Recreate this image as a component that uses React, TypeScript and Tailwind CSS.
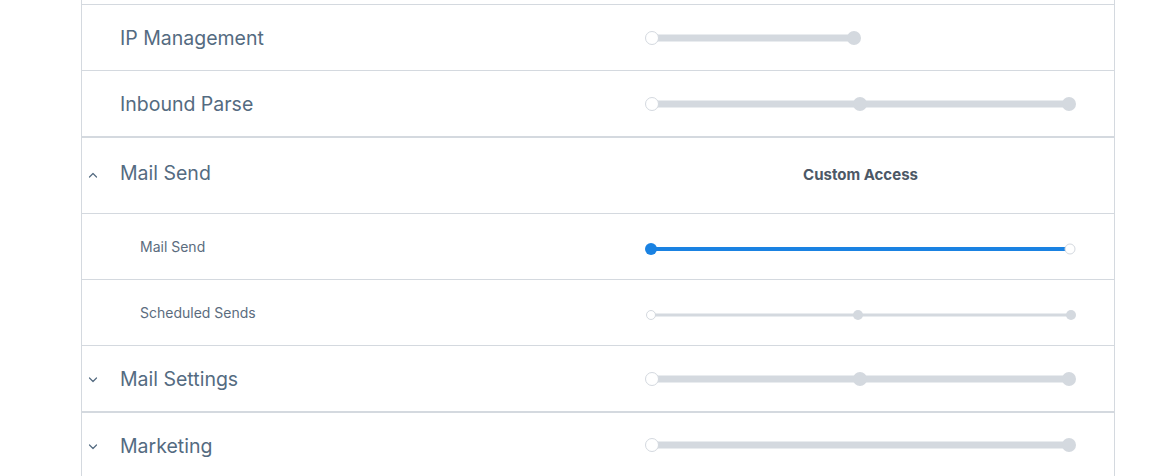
import React from "react";

// ---------------------------------------------------------------------------
// Types
// ---------------------------------------------------------------------------

type Dot = { at: number; filled: boolean };

interface SliderSpec {
  size: "lg" | "sm";
  active?: boolean;
  trackTo: number;
  dots: Dot[];
}

interface Row {
  label: string;
  level: 0 | 1;
  chevron?: "up" | "down";
  thickTop?: boolean;
  tall?: boolean;
  slider?: SliderSpec;
  custom?: boolean;
}

// ---------------------------------------------------------------------------
// Data
// ---------------------------------------------------------------------------

const LG3: SliderSpec = {
  size: "lg",
  trackTo: 424,
  dots: [
    { at: 7, filled: false },
    { at: 215, filled: true },
    { at: 424, filled: true },
  ],
};

const ROWS: Row[] = [
  {
    label: "IP Management",
    level: 0,
    slider: {
      size: "lg",
      trackTo: 209,
      dots: [
        { at: 7, filled: false },
        { at: 209, filled: true },
      ],
    },
  },
  { label: "Inbound Parse", level: 0, slider: LG3 },
  { label: "Mail Send", level: 0, chevron: "up", thickTop: true, tall: true, custom: true },
  {
    label: "Mail Send",
    level: 1,
    slider: {
      size: "sm",
      active: true,
      trackTo: 425,
      dots: [
        { at: 6, filled: true },
        { at: 425, filled: false },
      ],
    },
  },
  {
    label: "Scheduled Sends",
    level: 1,
    slider: {
      size: "sm",
      trackTo: 426,
      dots: [
        { at: 6, filled: false },
        { at: 213, filled: true },
        { at: 426, filled: true },
      ],
    },
  },
  { label: "Mail Settings", level: 0, chevron: "down", slider: LG3 },
  {
    label: "Marketing",
    level: 0,
    chevron: "down",
    thickTop: true,
    slider: {
      size: "lg",
      trackTo: 424,
      dots: [
        { at: 7, filled: false },
        { at: 424, filled: true },
      ],
    },
  },
];

// ---------------------------------------------------------------------------
// Pieces
// ---------------------------------------------------------------------------

function Chevron({ dir }: { dir: "up" | "down" }) {
  return (
    <svg width="10" height="6" viewBox="0 0 10 6" className="text-[#546b81]">
      <polyline
        points={dir === "up" ? "1.5,5 5,1.5 8.5,5" : "1.5,1 5,4.5 8.5,1"}
        fill="none"
        stroke="currentColor"
        strokeWidth="1.2"
        strokeLinecap="round"
        strokeLinejoin="round"
      />
    </svg>
  );
}

function Slider({ spec }: { spec: SliderSpec }) {
  const lg = spec.size === "lg";
  const blue = spec.active;
  const trackColor = blue ? "#1a82e2" : "#d4d9df";
  const trackH = lg ? 7 : blue ? 4 : 3;
  const dotD = lg ? 14 : blue ? 12 : 10;
  const left = spec.dots[0].at;

  return (
    <div className={`relative h-[16px] w-[431px] ${lg ? "" : "mt-[5px]"}`}>
      <div
        className="absolute top-1/2 -translate-y-1/2 rounded-full"
        style={{ left, width: spec.trackTo - left, height: trackH, background: trackColor }}
      />
      {spec.dots.map((d, i) => {
        const d2 = blue && !d.filled ? 11 : dotD;
        return (
          <div
            key={i}
            className="absolute top-1/2 -translate-x-1/2 -translate-y-1/2 rounded-full"
            style={{
              left: d.at,
              width: d2,
              height: d2,
              background: d.filled ? trackColor : "#ffffff",
              border: d.filled ? "none" : "1px solid #d4d9df",
            }}
          />
        );
      })}
    </div>
  );
}

// ---------------------------------------------------------------------------
// App
// ---------------------------------------------------------------------------

export default function App() {
  return (
    <div
      className="min-h-[476px] w-full bg-white"
      style={{ fontFamily: "Inter, 'Noto Sans', sans-serif" }}
    >
      <div className="ml-[81px] w-[1034px] border-x border-[#d4d9df] overflow-hidden h-[476px]">
        <div className="h-[4px]" />
        {ROWS.map((row, i) => (
          <div
            key={i}
            className={`flex items-center border-[#d4d9df] ${row.thickTop ? "border-t-2" : "border-t"} ${
              row.tall ? "h-[77px]" : "h-[66px]"
            }`}
          >
            <div className="flex flex-1 items-center">
              <div
                className={`flex w-[38px] justify-start pl-[6px] ${
                  row.tall ? "pb-[2px]" : row.level === 0 ? "pt-[3px]" : ""
                }`}
              >
                {row.chevron ? <Chevron dir={row.chevron} /> : null}
              </div>
              {row.level === 0 ? (
                <span
                  className={`text-[19.5px] leading-none text-[#546b81] ${row.tall ? "pb-[4px]" : "pt-[3px]"}`}
                >
                  {row.label}
                </span>
              ) : (
                <span className="pl-[20px] text-[14px] leading-none text-[#5b6c7e]">{row.label}</span>
              )}
            </div>
            <div className="mr-[38px] flex w-[431px] justify-center">
              {row.custom ? (
                <span className="text-[15px] font-bold text-[#4c5866]">Custom Access</span>
              ) : row.slider ? (
                <Slider spec={row.slider} />
              ) : null}
            </div>
          </div>
        ))}
      </div>
    </div>
  );
}
